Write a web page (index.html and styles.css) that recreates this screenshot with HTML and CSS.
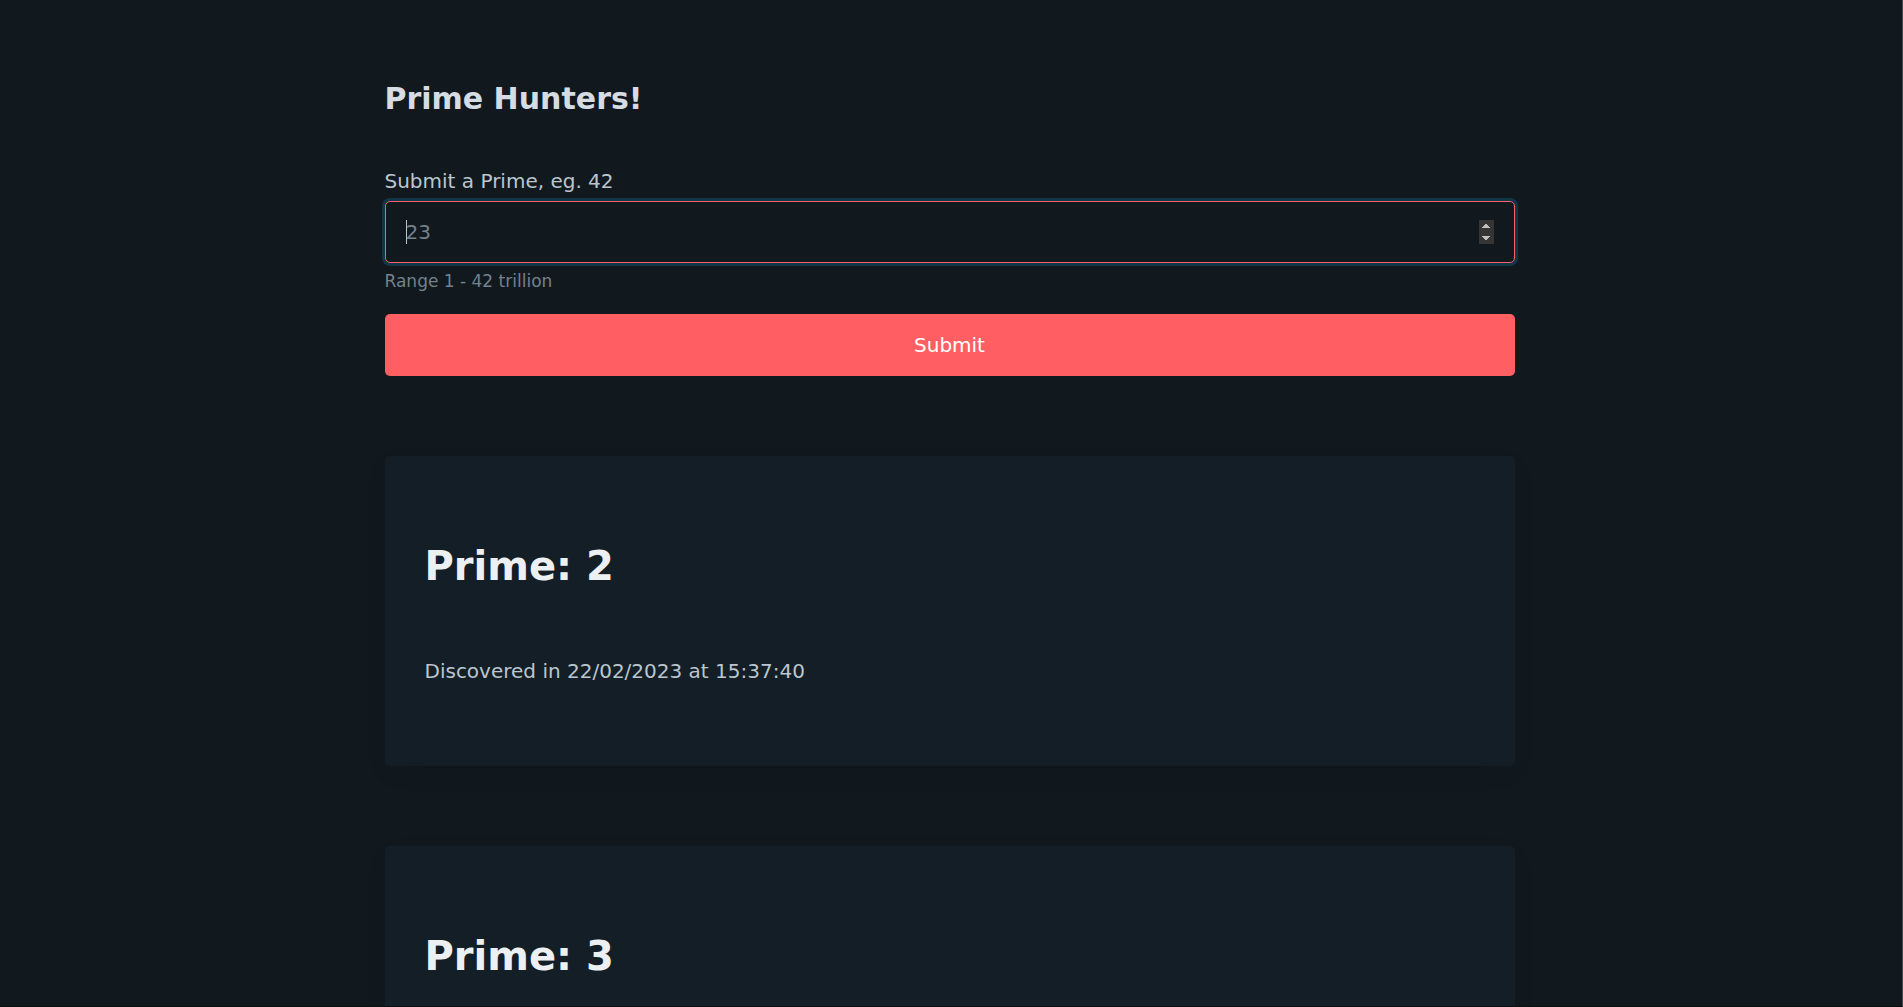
FILE: index.html
```html
<!DOCTYPE html>
<html lang="en">
<head>
  <meta charset="utf-8">
  <meta name="viewport" content="width=device-width, initial-scale=1">
  <title>Prime Hunters!</title>
  <link rel="stylesheet" href="styles.css">
</head>
<body>
  <main class="container">
    <h3 class="title">Prime Hunters!</h3>
    <form class="prime-form">
      <label class="prime-label" for="prime">Submit a Prime, eg. 42</label>
      <input class="prime-input" type="number" id="prime" name="prime" placeholder="23" min="1" max="42000000000000" aria-describedby="prime-range" autofocus>
      <small class="prime-hint" id="prime-range">Range 1 - 42 trillion</small>
      <button class="prime-submit" type="submit">Submit</button>
    </form>
    <section class="discoveries">
      <article class="card">
        <h1 class="card-title">Prime: 2</h1>
        <p class="card-text">Discovered in 22/02/2023 at 15:37:40</p>
      </article>
      <article class="card">
        <h1 class="card-title">Prime: 3</h1>
      </article>
    </section>
  </main>
</body>
</html>
```

FILE: styles.css
```css
:root {
  color-scheme: dark;
}

*,
*::before,
*::after {
  box-sizing: border-box;
}

body {
  height: 100vh;
  margin: 0;
  padding-right: 3px;
  overflow: hidden auto;
  scrollbar-width: none;
  border-right: 1px solid #484b4d;
  border-bottom: 1px solid #0b1013;
  background: #11191f;
  color: #bbc6ce;
  font: 20px/30px "DejaVu Sans", sans-serif;
}

.container {
  max-width: 1130px;
  margin: 0 auto;
  padding: 76px 0 80px;
}

.title {
  margin: 0 0 45px;
  color: #d5dce2;
  font-size: 30px;
  line-height: 45px;
}

.prime-form {
  display: flex;
  flex-direction: column;
}

.prime-label {
  margin-bottom: 5px;
}

.prime-input {
  width: 100%;
  height: 62px;
  padding: 15px 20px;
  border: 1px solid #ff6063;
  border-radius: 5px;
  outline: none;
  background: #11191f;
  color: #bbc6ce;
  caret-color: transparent;
  font: inherit;
}

.prime-input:focus {
  box-shadow: 0 0 0 3px rgba(16, 149, 193, 0.25);
}

/* steady, non-blinking caret while the field is empty */
.prime-input:focus:placeholder-shown {
  background: linear-gradient(#bbc6ce, #bbc6ce) 20px center / 1px 24px no-repeat #11191f;
}

.prime-input:not(:placeholder-shown) {
  caret-color: #bbc6ce;
}

.prime-input::placeholder {
  color: #73828c;
  opacity: 1;
}

.prime-input::-webkit-inner-spin-button {
  opacity: 1;
  filter: brightness(1.2);
}

.prime-hint {
  margin-bottom: 20px;
  padding-top: 5px;
  color: #73828c;
  font-size: 17px;
  line-height: 26px;
}

.prime-submit {
  height: 62px;
  padding: 15px 20px;
  border: 0;
  border-radius: 5px;
  background: #ff5f62;
  color: #fff;
  font: inherit;
}

.discoveries {
  display: grid;
  gap: 80px;
  margin-top: 80px;
}

.card {
  padding: 80px 40px;
  border-radius: 5px;
  background: #141e26;
  box-shadow: 0 8px 24px -6px rgba(0, 0, 0, 0.12);
}

.card-title {
  margin: 0 0 60px;
  color: #edf0f3;
  font-size: 40px;
  line-height: 60px;
}

.card-text {
  margin: 0;
}
```
